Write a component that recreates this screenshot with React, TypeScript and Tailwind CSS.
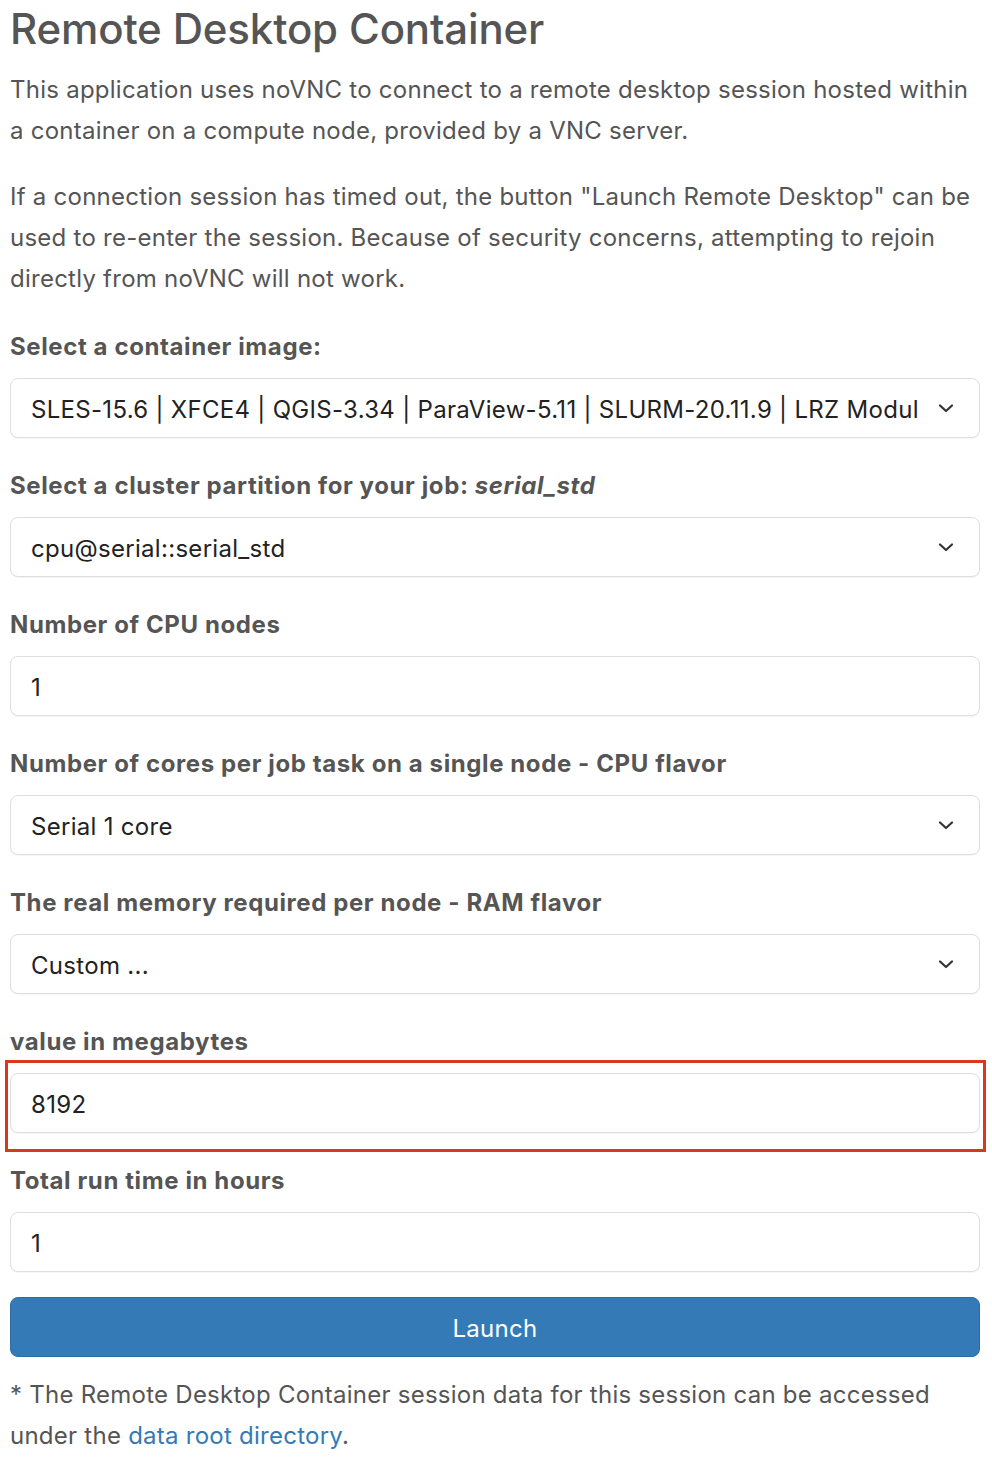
import React from "react";

const Chevron = () => (
  <svg width="18" height="12" viewBox="0 0 18 12" className="absolute right-[24px] top-1/2 -translate-y-1/2">
    <path d="M3 3.5 L9 9 L15 3.5" fill="none" stroke="#333" strokeWidth="2.2" strokeLinecap="round" strokeLinejoin="round" />
  </svg>
);

const Label = ({ children }: { children: React.ReactNode }) => (
  <div className="text-[24px] leading-[41px] font-bold text-[#555] tracking-[0.6px] mb-[11px]">{children}</div>
);

const Box = ({ value, select }: { value: string; select?: boolean }) => (
  <div className="relative h-[60px] rounded-[8px] border border-[#dedede] bg-white flex items-center pl-[20px] pr-[60px] pt-[4px] shadow-[0_1px_1px_rgba(0,0,0,0.04)]">
    <span className="text-[24px] text-[#222] tracking-[0.3px] whitespace-nowrap overflow-hidden">{value}</span>
    {select && <Chevron />}
  </div>
);

export default function App() {
  return (
    <div className="w-[992px] h-[1464px] bg-white" style={{ fontFamily: "Inter, 'Helvetica Neue', Arial, sans-serif" }}>
      <div className="pl-[10px] pr-[12px] pt-[5px]">
        <h1 className="text-[42px] leading-[48px] font-medium text-[#555] tracking-[-0.15px]">Remote Desktop Container</h1>
        <p className="mt-[16px] text-[24px] leading-[41px] text-[#555] tracking-[0.25px]">
          This application uses noVNC to connect to a remote desktop session hosted within a container on a compute node, provided by a VNC server.
        </p>
        <p className="mt-[25px] text-[24px] leading-[41px] text-[#555] tracking-[0.25px]">
          If a connection session has timed out, the button "Launch Remote Desktop" can be used to re-enter the session. Because of security concerns, attempting to rejoin directly from noVNC will not work.
        </p>

        <div className="mt-[27px]">
          <Label>Select a container image:</Label>
          <Box select value="SLES-15.6 | XFCE4 | QGIS-3.34 | ParaView-5.11 | SLURM-20.11.9 | LRZ Modules" />
        </div>
        <div className="mt-[27px]">
          <Label>
            Select a cluster partition for your job: <i>serial_std</i>
          </Label>
          <Box select value="cpu@serial::serial_std" />
        </div>
        <div className="mt-[27px]">
          <Label>Number of CPU nodes</Label>
          <Box value="1" />
        </div>
        <div className="mt-[27px]">
          <Label>Number of cores per job task on a single node - CPU flavor</Label>
          <Box select value="Serial 1 core" />
        </div>
        <div className="mt-[27px]">
          <Label>The real memory required per node - RAM flavor</Label>
          <Box select value="Custom ..." />
        </div>
        <div className="mt-[27px]">
          <Label>value in megabytes</Label>
          <div className="relative">
            <Box value="8192" />
            <div className="absolute left-[-5px] right-[-6px] top-[-13px] bottom-[-19px] border-[3px] border-[#d9381e] pointer-events-none" />
          </div>
        </div>
        <div className="mt-[27px]">
          <Label>Total run time in hours</Label>
          <Box value="1" />
        </div>
        <button className="mt-[25px] w-full h-[60px] rounded-[8px] bg-[#337ab7] border border-[#2e6da4] text-white text-[24px] tracking-[0.3px] pt-[4px]">
          Launch
        </button>
        <p className="mt-[17px] text-[24px] leading-[41px] text-[#555] tracking-[0.25px]">
          * The Remote Desktop Container session data for this session can be accessed under the{" "}
          <a className="text-[#337ab7]">data root directory</a>.
        </p>
      </div>
    </div>
  );
}
